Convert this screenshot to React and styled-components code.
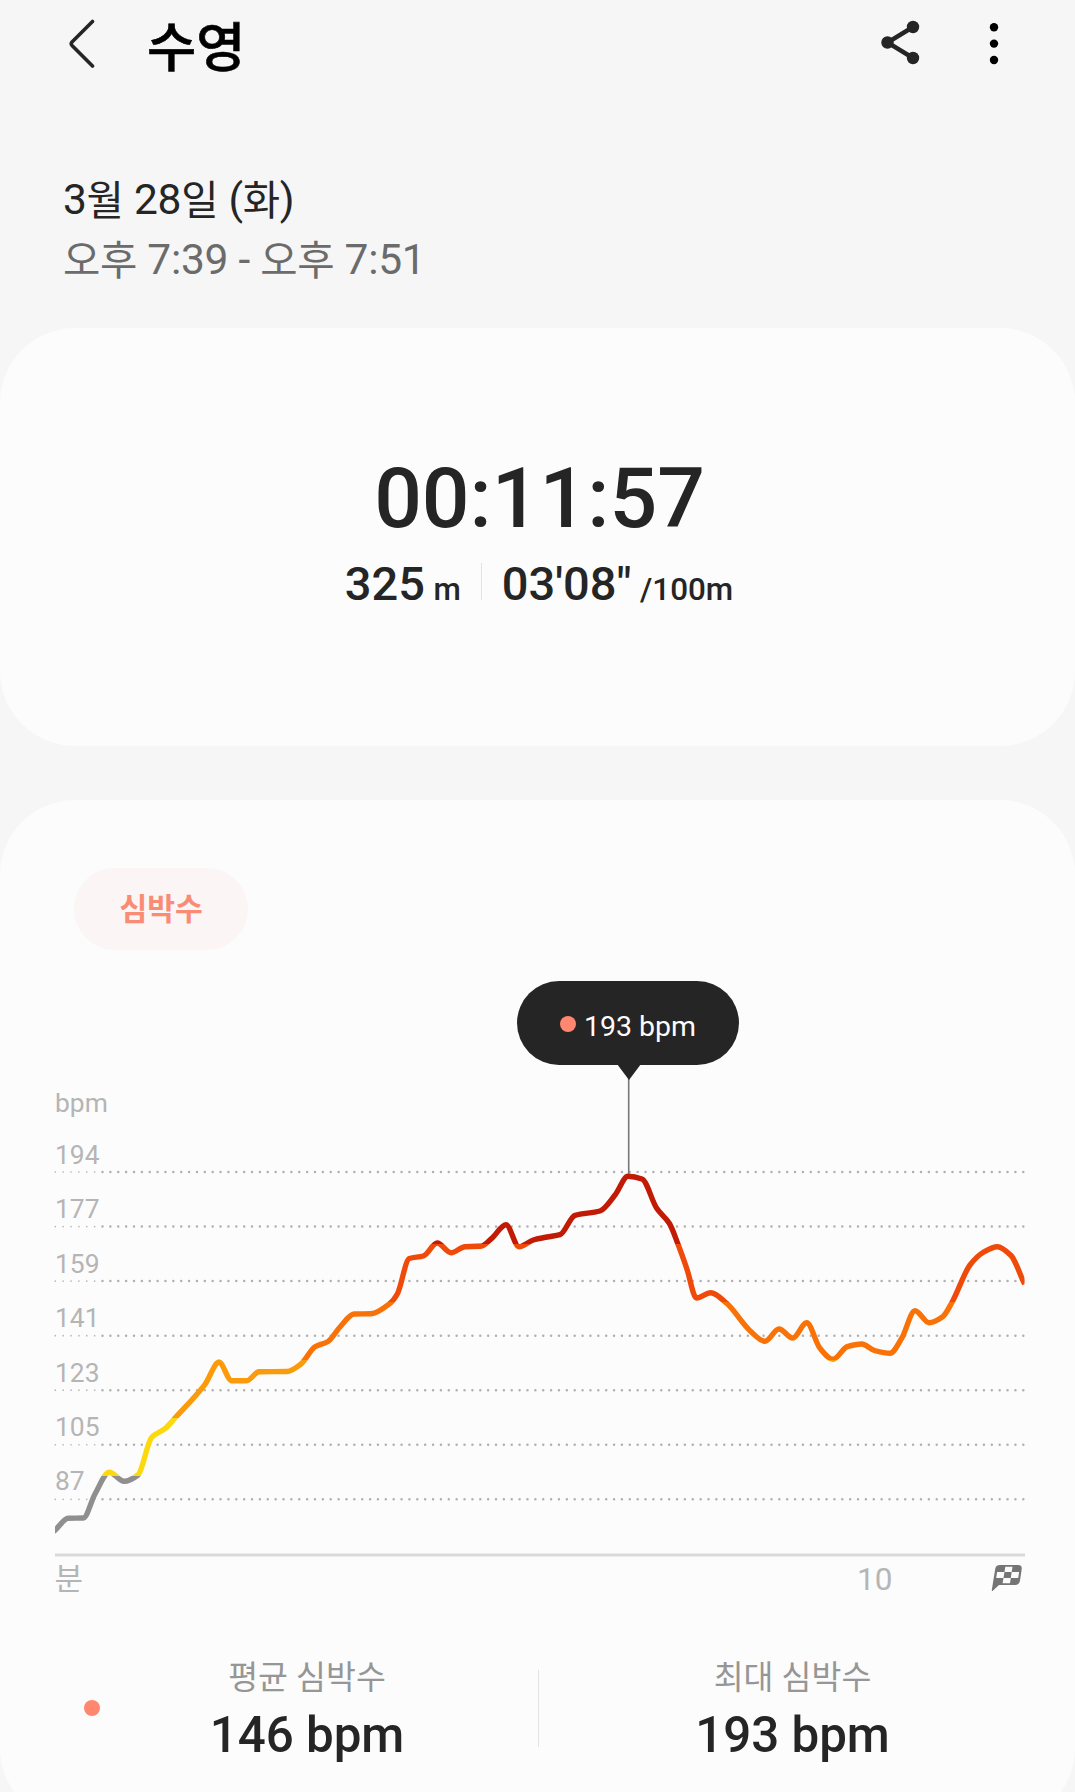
import React from 'react';
import styled, { createGlobalStyle } from 'styled-components';

const GlobalStyle = createGlobalStyle`
  * {
    box-sizing: border-box;
  }
  body {
    margin: 0;
    background: #f6f6f6;
    color: #252525;
    font-family: Roboto, 'Noto Sans CJK KR', sans-serif;
  }
`;

const Screen = styled.div`
  width: 1075px;
  height: 1792px;
  overflow: hidden;
  display: flex;
  flex-direction: column;
`;

const Header = styled.header`
  flex: none;
  display: flex;
  align-items: center;
  height: 88px;
  padding: 0 61px 0 64px;
`;

const Title = styled.h1`
  flex: 1;
  margin: 0 0 0 43px;
  padding-top: 8px;
  font-size: 53.5px;
  font-weight: 500;
  line-height: 79px;
  color: #000;
  -webkit-text-stroke: 0.6px #000;
`;

const IconButton = styled.button`
  display: flex;
  width: ${props => props.width}px;
  height: 50px;
  padding: 0;
  border: 0;
  background: none;
`;

const Actions = styled.div`
  display: flex;
  gap: 54px;
`;

const Period = styled.section`
  flex: none;
  height: 240px;
  padding: 82px 63px 0;
`;

const PeriodLine = styled.div`
  font-size: 42.5px;
  line-height: 60px;
  letter-spacing: -0.28px;
  color: ${props => (props.muted ? '#6b6b6b' : '#252525')};
`;

// hangul runs a touch smaller than the digits beside it
const Ko = styled.span`
  position: relative;
  top: 1px;
  font-size: 0.955em;
  line-height: 1;
`;

const Card = styled.section`
  flex: none;
  height: ${props => props.height}px;
  border-radius: 75px;
  background: #fcfcfc;
`;

const SummaryCard = styled(Card)`
  display: flex;
  flex-direction: column;
  align-items: center;
  margin-bottom: 54px;
  padding: 121px 0 0 4px;
`;

const Duration = styled.div`
  font-size: 84px;
  font-weight: 500;
  line-height: 100px;
`;

const Stats = styled.div`
  display: flex;
  align-items: baseline;
  margin: 7px 1px 0 0;
  font-size: 47px;
  font-weight: 500;
  line-height: 56px;
`;

const Unit = styled.span`
  margin-left: 8.5px;
  font-size: 31.4px;
`;

const Divider = styled.i`
  align-self: center;
  width: 1px;
  height: ${props => props.height}px;
  background: #e3e3e3;
`;

const StatDivider = styled(Divider)`
  align-self: flex-start;
  margin: 7px 20px 0 20px;
`;

const TotalDivider = styled(Divider)`
  margin-left: 24px;
`;

const HeartCard = styled(Card)`
  display: flex;
  flex-direction: column;
  padding-top: 68px;
`;

const Chip = styled.span`
  align-self: flex-start;
  height: 82px;
  margin-left: 74px;
  padding: 2px 45.5px 0;
  border-radius: 41px;
  background: #fbf5f5;
  color: #f98c75;
  font-size: 30.2px;
  font-weight: 700;
  line-height: 80px;
`;

const ChartArea = styled.div`
  position: relative;
  height: 690px;
  svg {
    display: block;
  }
`;

const AxisText = styled.text`
  font-size: ${props => props.$size || 26.4}px;
  fill: #b5b5b5;
`;

const Tooltip = styled.div`
  position: absolute;
  left: 517px;
  top: 31px;
  display: flex;
  align-items: center;
  justify-content: center;
  gap: 8px;
  width: 222px;
  height: 84px;
  padding: 2px 0 0;
  border-radius: 42px;
  background: #252525;
  color: #fcfcfc;
  font-size: 28.5px;
  &::after {
    content: '';
    position: absolute;
    left: 99.5px;
    top: 83px;
    border: solid transparent;
    border-width: 16px 12px 0;
    border-top-color: #252525;
  }
`;

const TooltipValue = styled.span`
  padding-top: 4px;
`;

const Dot = styled.i`
  flex: none;
  width: 16px;
  height: 16px;
  border-radius: 50%;
  background: #ff8770;
`;

const Totals = styled.div`
  display: flex;
  align-items: center;
  height: 120px;
  margin-top: 8px;
  padding-left: 84px;
`;

const Total = styled.div`
  flex: none;
  width: ${props => props.width}px;
  padding-top: 8px;
  text-align: center;
`;

const TotalLabel = styled.div`
  font-size: 32.5px;
  line-height: 46px;
  color: #969696;
`;

const TotalValue = styled.div`
  font-size: 49.3px;
  font-weight: 500;
  line-height: 68px;
`;

// vertical offset of the chart svg, so points can be kept in screen units
const TOP = 950;

const levels = [194, 177, 159, 141, 123, 105, 87];

const points = [
  [55.3, 1530], [68.3, 1518.3], [83.3, 1518], [95, 1494], [109.3, 1472.3], [124, 1481.3], [138, 1475],
  [151.7, 1437.3], [165, 1428.7], [175, 1418], [205, 1384.3], [219, 1362.3], [231.7, 1380.7], [246.7, 1380.7],
  [259, 1371.7], [287, 1371.5], [301, 1364], [315, 1346.7], [328, 1341.5], [340, 1327], [354, 1314],
  [371, 1313.7], [390, 1303.3], [397.3, 1294], [409.3, 1258.5], [423.3, 1256], [437.3, 1243], [451, 1252.7],
  [465, 1246.7], [480.7, 1246.3], [491.7, 1238.3], [506, 1224.7], [519, 1246.7], [533.3, 1240], [547, 1237],
  [560, 1234.7], [575, 1215.3], [600, 1211], [615, 1195], [628, 1176.3], [642, 1179], [656.7, 1208.3],
  [669.3, 1223.3], [678.3, 1245], [686.7, 1268.3], [696.5, 1298], [710.7, 1292.7], [726.7, 1303.3],
  [750, 1330.7], [765, 1341.3], [779, 1329], [792.7, 1338], [806.7, 1322.7], [820, 1348.3], [833, 1359.3],
  [847.3, 1346.7], [861.7, 1344], [875, 1350.7], [890, 1353.3], [901.7, 1338.3], [915, 1310.7],
  [929, 1322.7], [942.7, 1316.7], [952.3, 1301.7], [970, 1265], [983, 1252.5], [997.3, 1246.7],
  [1011, 1255.5], [1023.5, 1281.7],
];

const zones = [
  ['#c11a05', 1170, 1243.5],
  ['#f04a0a', 1243.5, 1302],
  ['#f97208', 1302, 1360],
  ['#fb9a0a', 1360, 1418],
  ['#fbd90c', 1418, 1476],
  ['#8f8f8f', 1476, 1540],
];

// monotone cubic through the points, flat at every local extreme
function linePath(pts) {
  const n = pts.length;
  const slope = i => (pts[i + 1][1] - pts[i][1]) / (pts[i + 1][0] - pts[i][0]);
  const tangents = pts.map((p, i) => {
    if (i === 0) return slope(0);
    if (i === n - 1) return slope(n - 2);
    const a = slope(i - 1);
    const b = slope(i);
    if (a * b <= 0) return 0;
    return (2 * a * b) / (a + b);
  });
  let d = `M${pts[0][0]} ${pts[0][1]}`;
  for (let i = 1; i < n; i += 1) {
    const [x0, y0] = pts[i - 1];
    const [x1, y1] = pts[i];
    const h = (x1 - x0) / 3;
    d += `C${x0 + h} ${y0 + tangents[i - 1] * h} ${x1 - h} ${y1 - tangents[i] * h} ${x1} ${y1}`;
  }
  return d;
}

const FlagIcon = () => (
  <g transform="translate(991.5 1565)">
    <path
      d="M8.500 0H26.500Q30.600 0 30.200 4L28.500 15.500Q27.800 20 23.500 20H7.500L1.300 25.800Q.2 26.400.3 25L3.700 4Q4.300 0 8.500 0Z"
      fill="#757575"
    />
    <path
      d="M13.800 1.800H21L20.200 7H13ZM5.600 7H13L12 13H4.700ZM20.200 7H27.600L26.700 13H19.300ZM12 13H19.300L18.500 18.200H11.100Z"
      fill="#fcfcfc"
    />
  </g>
);

const HeartRateChart = () => (
  <svg width="1075" height="690" viewBox={`0 ${TOP} 1075 690`}>
    <defs>
      <linearGradient id="zones" gradientUnits="userSpaceOnUse" x1="0" y1="1170" x2="0" y2="1540">
        {zones.map(([color, from, to]) => (
          <React.Fragment key={color}>
            <stop offset={(from - 1170) / 370} stopColor={color} />
            <stop offset={(to - 1170) / 370} stopColor={color} />
          </React.Fragment>
        ))}
      </linearGradient>
      <clipPath id="plot">
        <rect x="55" y="1160" width="969.500" height="390" />
      </clipPath>
    </defs>
    <AxisText x="55" y="1112">bpm</AxisText>
    {levels.map((level, i) => {
      const y = 1172 + i * 54.55;
      return (
        <g key={level}>
          <AxisText x="55" y={1164 + i * 54.4}>{level}</AxisText>
          <path d={`M55.300 ${y}H98`} stroke="#b8b8b8" strokeWidth="1.700" strokeLinecap="round" strokeDasharray="0 7.870" />
          <path d={`M102.500 ${y}H1024`} stroke="#b0b0b0" strokeWidth="2.500" strokeLinecap="round" strokeDasharray="0 7.870" />
        </g>
      );
    })}
    <path d="M55 1555H1025" stroke="#d9d9d9" strokeWidth="2.800" />
    <path d="M628.700 1078V1175" stroke="#777" strokeWidth="1.600" />
    <path
      d={linePath(points)}
      clipPath="url(#plot)"
      fill="none"
      stroke="url(#zones)"
      strokeWidth="5.400"
      strokeLinejoin="round"
      strokeLinecap="square"
    />
    <AxisText x="54.500" y="1589.500" $size={31}>분</AxisText>
    <AxisText x="857" y="1590" $size={31.5}>10</AxisText>
    <FlagIcon />
  </svg>
);

const App = () => (
  <Screen>
    <GlobalStyle />
    <Header>
      <IconButton width={40} aria-label="back">
        <svg width="40" height="50" fill="none" stroke="#252525" strokeWidth="3.600" strokeLinecap="round">
          <path d="M28.500 2.500L8 23Q6.500 24.700 8 26.400L28.500 47" strokeLinejoin="round" />
        </svg>
      </IconButton>
      <Title>수영</Title>
      <Actions>
        <IconButton width={40} aria-label="share">
          <svg width="40" height="50" fill="#252525">
            <path d="M33 8L7.500 23.500L33 39" fill="none" stroke="#252525" strokeWidth="4.400" />
            <circle cx="33" cy="8" r="6.200" />
            <circle cx="7.500" cy="23.500" r="6.200" />
            <circle cx="33" cy="39" r="6.200" />
          </svg>
        </IconButton>
        <IconButton width={40} aria-label="more">
          <svg width="40" height="50">
            <circle cx="20" cy="8.200" r="4.200" />
            <circle cx="20" cy="24.600" r="4.200" />
            <circle cx="20" cy="41" r="4.200" />
          </svg>
        </IconButton>
      </Actions>
    </Header>
    <Period>
      <PeriodLine>
        3<Ko>월</Ko> 28<Ko>일</Ko> (<Ko>화</Ko>)
      </PeriodLine>
      <PeriodLine muted>
        <Ko>오후</Ko> 7:39 - <Ko>오후</Ko> 7:51
      </PeriodLine>
    </Period>
    <SummaryCard height={418}>
      <Duration>00:11:57</Duration>
      <Stats>
        325<Unit>m</Unit>
        <StatDivider height={37} />
        03'08"<Unit>/100m</Unit>
      </Stats>
    </SummaryCard>
    <HeartCard height={1023}>
      <Chip>심박수</Chip>
      <ChartArea>
        <HeartRateChart />
        <Tooltip>
          <Dot />
          <TooltipValue>193 bpm</TooltipValue>
        </Tooltip>
      </ChartArea>
      <Totals>
        <Dot />
        <Total width={414}>
          <TotalLabel>평균 심박수</TotalLabel>
          <TotalValue>146 bpm</TotalValue>
        </Total>
        <TotalDivider height={77} />
        <Total width={507}>
          <TotalLabel>최대 심박수</TotalLabel>
          <TotalValue>193 bpm</TotalValue>
        </Total>
      </Totals>
    </HeartCard>
  </Screen>
);

export default App;
